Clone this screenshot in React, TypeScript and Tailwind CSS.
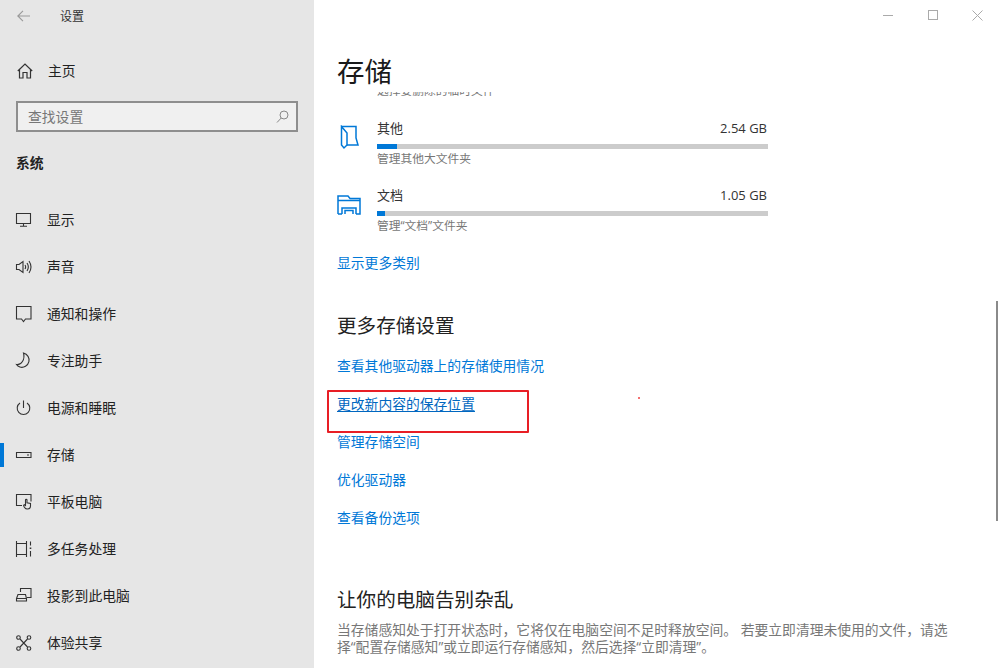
import type { ReactNode } from 'react'

// Open Sans first so digits and curly quotes come out narrow, CJK falls through
const FONT = "font-['Open_Sans','Noto_Sans_CJK_SC',sans-serif]"

const Icon = ({ children, w = 18, h = 18 }: { children: ReactNode; w?: number; h?: number }) => (
  <svg width={w} height={h} viewBox={`0 0 ${w} ${h}`} fill="none" stroke="#333" strokeWidth="1.1" className="shrink-0">
    {children}
  </svg>
)

const navItems: { label: string; active?: boolean; icon: ReactNode }[] = [
  {
    label: '显示',
    icon: (
      <Icon>
        <path d="M1.500 2.500h14v10h-14zM8.500 12.500v2.500M5 15.200h7" />
      </Icon>
    ),
  },
  {
    label: '声音',
    icon: (
      <Icon>
        <path d="M1.500 6.500h2.500L8 3.500v11L4 11.500H1.500z" />
        <path d="M10 7c.8 1.200.8 2.800 0 4M12 5c1.600 2.400 1.600 5.600 0 8M14 3c2.400 3.600 2.400 8.400 0 12" />
      </Icon>
    ),
  },
  {
    label: '通知和操作',
    icon: (
      <Icon>
        <path d="M1.500 1.500h14.500v12.500H10.500L8.500 16.500 6.500 14H1.500z" />
      </Icon>
    ),
  },
  {
    label: '专注助手',
    icon: (
      <Icon>
        <path d="M8.500 1c4 1.200 6.300 4.800 5.400 8.700-.9 4-5.200 6.500-9 5.300-1.500-.5-2.600-1.300-3.400-2.500 4.800.7 8.800-5 7-11.500z" />
      </Icon>
    ),
  },
  {
    label: '电源和睡眠',
    icon: (
      <Icon>
        <path d="M8.500 1.500v7.500M5 4a6.300 6.300 0 1 0 7 0" />
      </Icon>
    ),
  },
  {
    label: '存储',
    active: true,
    icon: (
      <Icon>
        <path d="M1.500 6.500h14.500v5H1.500zM12 9h2" />
      </Icon>
    ),
  },
  {
    label: '平板电脑',
    icon: (
      <Icon>
        <path d="M7 12.500H1.500v-11h14.500v7" />
        <path d="M10.500 7v5.500l-1.300-.8c-.9.200-.7 1.300 0 2.300.8 1.400 1.700 2 3 2 2 0 3.300-1.300 3.300-3v-2.500l-3.500-.8V7c0-1-1.500-1-1.500 0z" />
      </Icon>
    ),
  },
  {
    label: '多任务处理',
    icon: (
      <Icon>
        <path d="M1.500 1v16M11.500 1v16M1.500 3.500h10M1.500 14.500h10M15.500 1.500v4M15.500 11v5.500" />
        <path d="M15.500 7.500v1.500" strokeWidth="1.600" />
      </Icon>
    ),
  },
  {
    label: '投影到此电脑',
    icon: (
      <Icon>
        <path d="M5.500 5V1.500h10.500v9h-4" />
        <path d="M1.500 11.500L3 7.500h7.500l1 4v2.500h-10zM1.500 11.500h10" />
      </Icon>
    ),
  },
  {
    label: '体验共享',
    icon: (
      <Icon>
        <circle cx="3.500" cy="3.500" r="1.800" />
        <circle cx="14" cy="3.500" r="1.800" />
        <circle cx="3.500" cy="14.500" r="1.800" />
        <circle cx="14" cy="14.500" r="1.800" />
        <path d="M5 5l7.500 8M12.500 5L5 13" />
      </Icon>
    ),
  },
]

const links = ['查看其他驱动器上的存储使用情况', '更改新内容的保存位置', '管理存储空间', '优化驱动器', '查看备份选项']

function Sidebar() {
  return (
    <aside className="w-[314px] h-[668px] shrink-0 bg-[#e6e6e6] text-[#1f1f1f] overflow-hidden">
      <div className="h-[32px] flex items-center pl-[17px]">
        <svg width="13" height="12" viewBox="0 0 13 12" fill="none" stroke="#999" strokeWidth="1.100">
          <path d="M6 .8L.8 6 6 11.200M.8 6H13" />
        </svg>
        <span className="ml-[30px] mt-[2px] text-[12px] text-[#333]">设置</span>
      </div>
      <div className="h-[47px] mt-[15px] flex items-center pl-[17px] gap-[15px]">
        <svg width="16" height="16" viewBox="0 0 16 16" fill="none" stroke="#333" strokeWidth="1.200">
          <path d="M.8 8L8 1l7.200 7M2.500 6.500v8.500h3.500V9.500h4V15h3.500V6.500" />
        </svg>
        <span className="mt-[2px] text-[13.8px] text-[#222]">主页</span>
      </div>
      <div className="mx-[16px] mt-[7px] h-[31px] border-2 border-[#8e8e8e] bg-[#f0f0f0] flex items-center justify-between pl-[10px] pr-[7px]">
        <span className="mt-[2px] text-[13.8px] text-[#777]">查找设置</span>
        <svg width="13" height="13" viewBox="0 0 13 13" fill="none" stroke="#888" strokeWidth="1">
          <circle cx="8" cy="5" r="4" />
          <path d="M5.200 8L1 12.500" />
        </svg>
      </div>
      <div className="mt-[21px] pl-[16px] text-[13.8px] leading-[20px] font-bold text-[#222]">系统</div>
      <nav className="mt-[23px]">
        {navItems.map((item) => (
          <div key={item.label} className="relative h-[47px] flex items-center pl-[15px] gap-[14px]">
            {item.active && <div className="absolute left-0 top-[12px] w-[4px] h-[24px] bg-[#0078d7]" />}
            {item.icon}
            <span className="mt-[2px] text-[13.8px] text-[#222]">{item.label}</span>
          </div>
        ))}
      </nav>
    </aside>
  )
}

function StorageRow({ name, size, desc, fill, icon, top }: { name: string; size: string; desc: string; fill: number; icon: ReactNode; top: string }) {
  return (
    <div className={`flex ${top}`}>
      <div className="w-[40px] shrink-0">{icon}</div>
      <div className="w-[391px]">
        <div className="flex justify-between items-center h-[20px] pt-[4px] text-[13px] text-[#333]">
          <span>{name}</span>
          <span className="text-[13px] pr-px">{size}</span>
        </div>
        <div className="mt-[7px] h-[5px] bg-[#cccccc]">
          <div className="h-full bg-[#0078d7]" style={{ width: fill }} />
        </div>
        <div className="text-[11.75px] leading-[18px] text-[#777]">{desc}</div>
      </div>
    </div>
  )
}

function Main() {
  return (
    <main className="relative flex-1 h-[668px] bg-white overflow-hidden">
      <div className="absolute right-0 top-0 h-[30px] flex items-center">
        <div className="w-[45px] flex justify-center">
          <div className="w-[10px] h-px bg-[#aaa]" />
        </div>
        <div className="w-[45px] flex justify-center">
          <div className="w-[10px] h-[10px] border border-[#aaa]" />
        </div>
        <div className="w-[45px] flex justify-center">
          <svg width="11" height="11" viewBox="0 0 11 11" stroke="#aaa" strokeWidth="1">
            <path d="M.5.5l10 10M10.500.5l-10 10" />
          </svg>
        </div>
      </div>

      <div className="pl-[23px]">
        <h1 className="pt-[51px] h-[92px] text-[27.5px] leading-[41px] text-[#1a1a1a]">存储</h1>
        {/* row scrolled under the sticky title, only the glyph bottoms show */}
        <div className="h-[6px] overflow-hidden pl-[40px] relative">
          <div className="absolute top-[-11px] text-[11.75px] leading-[18px] text-[#777] whitespace-nowrap">选择要删除的临时文件</div>
        </div>

        <StorageRow
          top="mt-[19px]"
          name="其他"
          size="2.54 GB"
          desc="管理其他大文件夹"
          fill={20}
          icon={
            <svg width="20" height="25" viewBox="0 0 20 25" fill="none" stroke="#0078d7" strokeWidth="1.500" className="ml-[3px] mt-[8px]">
              <path d="M1.500 1.500H16V13l2 7H7" />
              <path d="M1.500 1.500V20L4 23l3-3V8z" />
            </svg>
          }
        />
        <StorageRow
          top="mt-[17px]"
          name="文档"
          size="1.05 GB"
          desc="管理“文档”文件夹"
          fill={8}
          icon={
            <svg width="24" height="20" viewBox="0 0 24 20" fill="none" stroke="#0078d7" strokeWidth="1.500" className="mt-[11px]">
              <path d="M1 19V1h10l2 2.500h10V19h-4M1 5.500h22M1 19h4M5 19v-6h14v6M8 19v-3.500h8V19" />
            </svg>
          }
        />

        <div className="mt-[19px] text-[13.8px] leading-[20px] text-[#0078d7]">显示更多类别</div>

        <h2 className="mt-[37px] text-[19.6px] leading-[32px] text-[#222]">更多存储设置</h2>

        <div className="mt-[14px] flex flex-col gap-[18px]">
          {links.map((link) => (
            <div key={link} className="h-[20px] text-[13.8px] leading-[20px] text-[#0078d7]">
              <span className={link === '更改新内容的保存位置' ? 'underline underline-offset-2 text-[#0067c0]' : ''}>{link}</span>
            </div>
          ))}
        </div>

        <h2 className="mt-[56px] text-[19.6px] leading-[32px] text-[#222]">让你的电脑告别杂乱</h2>
        <p className="mt-[5px] text-[13.8px] leading-[17px] text-[#777] whitespace-nowrap">
          当存储感知处于打开状态时，它将仅在电脑空间不足时释放空间。 若要立即清理未使用的文件，请选
          <br />
          择“配置存储感知”或立即运行存储感知，然后选择“立即清理”。
        </p>
      </div>

      {/* red annotation drawn over the screenshot */}
      <div className="absolute left-[13px] top-[390px] w-[202px] h-[43px] border-2 border-[#e81e25] rounded-[1px]" />
      <div className="absolute left-[324px] top-[397px] w-[2px] h-[2px] rounded-full bg-[#f04040]" />

      <div className="absolute left-[682px] top-[301px] w-[2px] h-[220px] bg-[#8a8a8a]" />
    </main>
  )
}

export default function App() {
  return (
    <div className={`${FONT} w-[1000px] h-[668px] flex overflow-hidden`}>
      <Sidebar />
      <Main />
    </div>
  )
}
